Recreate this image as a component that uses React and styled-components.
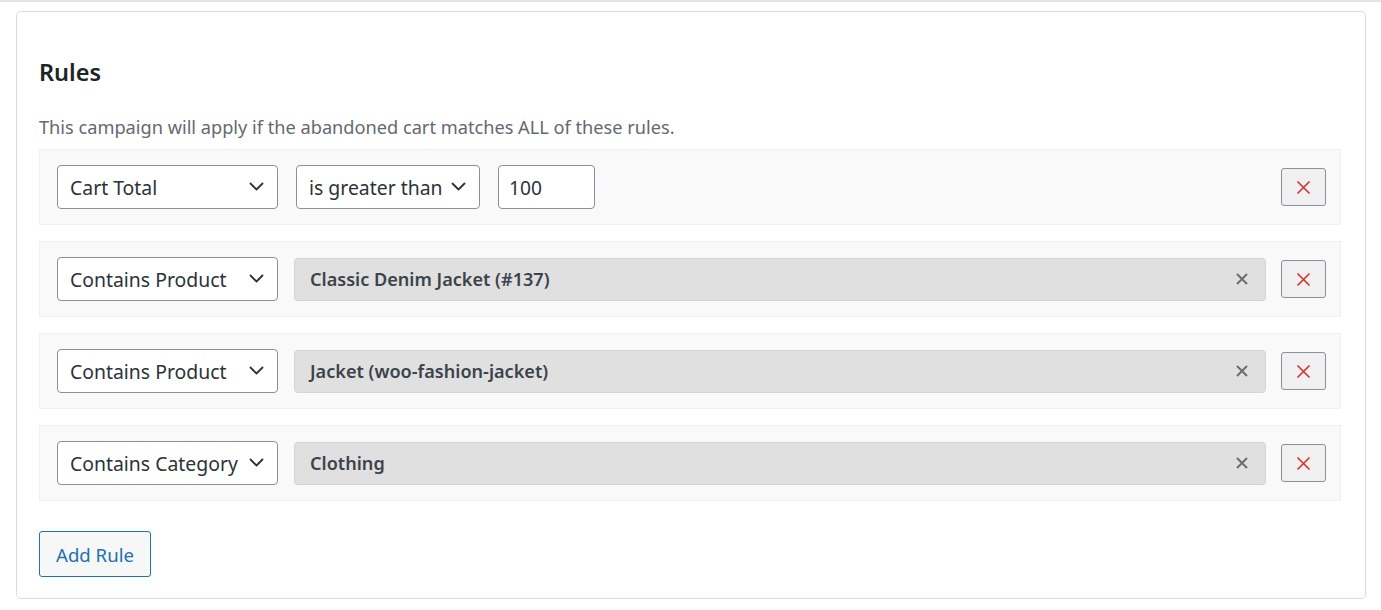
import React from "react";
import styled, { createGlobalStyle } from "styled-components";

const Global = createGlobalStyle`
  html, body { margin: 0; padding: 0; background: #fff; }
  body {
    font-family: "Noto Sans", "Open Sans", sans-serif;
    color: #1d2327;
    border-top: 2px solid #e5e5e5;
  }
  * { box-sizing: border-box; }
`;

const Page = styled.div`
  padding: 9px 15px 10px 16px;
`;

const Card = styled.section`
  border: 1px solid #dcdcde;
  border-radius: 5px;
  background: #fff;
  padding: 46px 24px 21px 22px;
`;

const Title = styled.h2`
  margin: 0;
  font-size: 23.5px;
  line-height: 29px;
  font-weight: 600;
  color: #1d2327;
`;

const Description = styled.p`
  margin: 28px 0 10px;
  font-size: 18.2px;
  line-height: 24px;
  color: #646970;
`;

const RuleList = styled.div`
  display: flex;
  flex-direction: column;
  gap: 16px;
`;

const Row = styled.div`
  display: flex;
  align-items: center;
  gap: ${(p) => p.$gap}px;
  background: #f9f9f9;
  border: 1px solid #f0f0f1;
  padding: 15px 14px 15px 17px;
`;

const SelectBox = styled.div`
  position: relative;
  width: ${(p) => p.$width}px;
  height: 44px;
  flex: none;
  display: flex;
  align-items: center;
  padding-left: ${(p) => p.$pad}px;
  border: 1px solid #8c8f94;
  border-radius: 4px;
  background: #fff;
  font-size: 19.4px;
  color: #2c3338;
  white-space: nowrap;
`;

const Chevron = styled.svg`
  position: absolute;
  right: 13px;
  top: 50%;
  margin-top: -5px;
  width: 15px;
  height: 9px;
`;

const NumberInput = styled.div`
  width: 97px;
  height: 44px;
  flex: none;
  display: flex;
  align-items: center;
  padding-left: 10px;
  border: 1px solid #8c8f94;
  border-radius: 4px;
  background: #fff;
  font-size: 19.2px;
  color: #2c3338;
`;

const TagField = styled.div`
  flex: 1;
  height: 43px;
  display: flex;
  align-items: center;
  justify-content: space-between;
  padding: 0 17px 0 15px;
  background: #e0e0e0;
  border: 1px solid #d4d4d4;
  border-radius: 4px;
  font-size: 18.1px;
  font-weight: 600;
  color: #3c434a;
  margin-right: -1px;
`;

const ClearIcon = styled.svg`
  width: 12px;
  height: 12px;
  flex: none;
`;

const DeleteButton = styled.button`
  flex: none;
  margin-left: auto;
  width: 45px;
  height: 38px;
  display: flex;
  align-items: center;
  justify-content: center;
  border: 1px solid #8c8f94;
  border-radius: 3px;
  background: #f0f0f1;
  padding: 0;
  cursor: pointer;
`;

const DeleteIcon = styled.svg`
  width: 13px;
  height: 13px;
`;

const AddButton = styled.button`
  margin-top: 30px;
  height: 46px;
  padding: 0 16px;
  border: 1px solid #2271b1;
  border-radius: 3px;
  background: #f6f7f7;
  color: #2271b1;
  font-family: inherit;
  font-size: 18.6px;
  cursor: pointer;
`;

const Select = ({ width, pad = 12, children }) => (
  <SelectBox $width={width} $pad={pad}>
    {children}
    <Chevron viewBox="0 0 15 9">
      <path d="M1.5 1.5l6 6 6-6" fill="none" stroke="#2c3338" strokeWidth="1.8" strokeLinecap="round" strokeLinejoin="round" />
    </Chevron>
  </SelectBox>
);

const Delete = () => (
  <DeleteButton aria-label="Remove rule">
    <DeleteIcon viewBox="0 0 13 13">
      <path d="M1 1l11 11M12 1L1 12" stroke="#d63638" strokeWidth="1.7" strokeLinecap="round" />
    </DeleteIcon>
  </DeleteButton>
);

const Tag = ({ children }) => (
  <TagField>
    <span>{children}</span>
    <ClearIcon viewBox="0 0 12 12">
      <path d="M1 1l10 10M11 1L1 11" stroke="#6d6d6d" strokeWidth="2" />
    </ClearIcon>
  </TagField>
);

const productRules = [
  { type: "Contains Product", value: "Classic Denim Jacket (#137)" },
  { type: "Contains Product", value: "Jacket (woo-fashion-jacket)" },
  { type: "Contains Category", value: "Clothing" },
];

export default function App() {
  return (
    <>
      <Global />
      <Page>
        <Card>
          <Title>Rules</Title>
          <Description>This campaign will apply if the abandoned cart matches ALL of these rules.</Description>
          <RuleList>
            <Row $gap={18}>
              <Select width={221}>Cart Total</Select>
              <Select width={184}>is greater than</Select>
              <NumberInput>100</NumberInput>
              <Delete />
            </Row>
            {productRules.map((r, i) => (
              <Row key={i} $gap={16}>
                <Select width={221}>{r.type}</Select>
                <Tag>{r.value}</Tag>
                <Delete />
              </Row>
            ))}
          </RuleList>
          <AddButton>Add Rule</AddButton>
        </Card>
      </Page>
    </>
  );
}
